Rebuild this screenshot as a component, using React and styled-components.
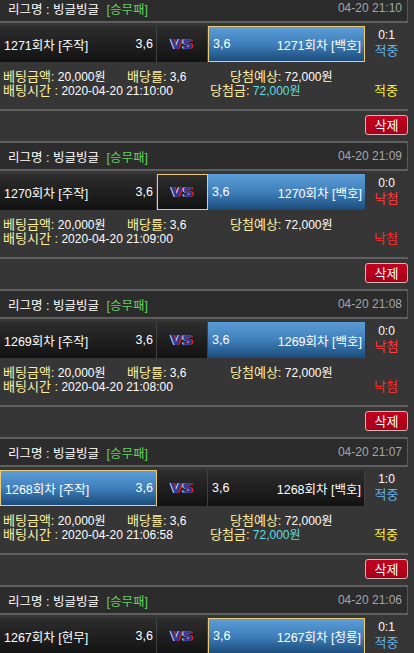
import React from 'react'
import styled, { createGlobalStyle, css } from 'styled-components'

const GlobalStyle = createGlobalStyle`
  html, body {
    margin: 0;
    padding: 0;
    background: #363636;
    overflow: hidden;
  }
  body {
    font-family: "Liberation Sans", "Noto Sans CJK KR", sans-serif;
    font-size: 12px;
    color: #fff;
  }
`

const bets = [
  { no: 1271, date: '04-20 21:10', home: '주작', away: '백호', score: '0:1', win: true, pick: 'away', winner: 'away', time: '2020-04-20 21:10:00' },
  { no: 1270, date: '04-20 21:09', home: '주작', away: '백호', score: '0:0', win: false, pick: 'draw', winner: 'away', time: '2020-04-20 21:09:00' },
  { no: 1269, date: '04-20 21:08', home: '주작', away: '백호', score: '0:0', win: false, pick: null, winner: 'away', time: '2020-04-20 21:08:00' },
  { no: 1268, date: '04-20 21:07', home: '주작', away: '백호', score: '1:0', win: true, pick: 'home', winner: 'home', time: '2020-04-20 21:06:58' },
  { no: 1267, date: '04-20 21:06', home: '현무', away: '청룡', score: '0:1', win: true, pick: 'away', winner: 'away', time: '2020-04-20 21:06:00' },
]

export default function App() {
  return (
    <>
      <GlobalStyle />
      <List>
        {bets.map((b) => (
          <Bet key={b.no} bet={b} />
        ))}
      </List>
    </>
  )
}

function Bet({ bet }) {
  return (
    <Block>
      <Header>
        <League>
          리그명 : 빙글빙글 <Kind>[승무패]</Kind>
        </League>
        <Date>{bet.date}</Date>
      </Header>
      <MatchRow>
        <Team $win={bet.winner === 'home'} $picked={bet.pick === 'home'}>
          <span>{bet.no}회차 [{bet.home}]</span>
          <span>3,6</span>
        </Team>
        <Versus $picked={bet.pick === 'draw'}>VS</Versus>
        <Team $win={bet.winner === 'away'} $picked={bet.pick === 'away'}>
          <span>3,6</span>
          <span>{bet.no}회차 [{bet.away}]</span>
        </Team>
        <Score>
          <div>{bet.score}</div>
          <Result $win={bet.win}>{bet.win ? '적중' : '낙첨'}</Result>
        </Score>
      </MatchRow>
      <Info>
        <InfoRow>
          <Cell $w={124}>
            <Label>베팅금액:</Label> 20,000원
          </Cell>
          <Cell $w={103}>
            <Label>배당률:</Label> 3,6
          </Cell>
          <Cell>
            <Label>당첨예상:</Label> 72,000원
          </Cell>
        </InfoRow>
        <InfoRow>
          <Cell $w={207}>
            <Label>배팅시간 :</Label> {bet.time}
          </Cell>
          <Cell $w={164}>
            {bet.win && (
              <>
                <Label>당첨금:</Label> <Prize>72,000원</Prize>
              </>
            )}
          </Cell>
          <Cell>
            <Outcome $win={bet.win}>{bet.win ? '적중' : '낙첨'}</Outcome>
          </Cell>
        </InfoRow>
      </Info>
      <Actions>
        <DeleteButton>삭제</DeleteButton>
      </Actions>
    </Block>
  )
}

const List = styled.div`
  width: 408px;
  margin-top: -7px;
`

const Block = styled.div`
  display: flex;
  flex-direction: column;
`

const Header = styled.div`
  height: 26px;
  border-top: 2px solid #5f5f5f;
  border-bottom: 2px solid #5f5f5f;
  border-right: 1px solid #585858;
  background: #2c2c2c;
  display: flex;
  align-items: center;
  justify-content: space-between;
  padding: 0 5px 0 8px;
`

const League = styled.div`
  font-size: 12.5px;
  color: #fff;
  white-space: pre;
`

const Kind = styled.span`
  color: #62d05c;
  margin-left: 4px;
`

const Date = styled.div`
  font-size: 12px;
  color: #a6a6a6;
`

const MatchRow = styled.div`
  margin-top: 3px;
  height: 36px;
  display: flex;
`

const darkCell = css`
  background: linear-gradient(#2d2d2d, #121212);
  border-right: 1px solid #404040;
`

const Team = styled.div`
  box-sizing: border-box;
  width: 157px;
  display: flex;
  align-items: center;
  justify-content: space-between;
  padding: 0 3px 0 4px;
  font-size: 12.5px;
  white-space: nowrap;
  ${darkCell}
  ${(p) =>
    p.$win &&
    css`
      background: linear-gradient(#5c9dd8, #3f7fbb 50%, #1b4c7b);
      border-right: none;
    `}
  ${(p) =>
    p.$picked &&
    css`
      border: 1px solid #ebcb73;
    `}
  & + & {
    width: 156px;
  }
`

const Versus = styled.div`
  box-sizing: border-box;
  width: 51px;
  display: flex;
  align-items: center;
  justify-content: center;
  font-family: "DejaVu Sans", sans-serif;
  font-weight: 900;
  font-size: 14px;
  letter-spacing: 1px;
  color: #2b3c9c;
  -webkit-text-stroke: 0.4px #2b3c9c;
  text-shadow: -1px 0 #ffffff, 1.5px 0 #ff1a2a;
  ${darkCell}
  ${(p) =>
    p.$picked &&
    css`
      border: 1px solid #ebcb73;
    `}
`

const Score = styled.div`
  flex: 1;
  display: flex;
  flex-direction: column;
  align-items: center;
  padding-top: 1px;
  line-height: 16px;
  font-size: 12px;
`

const Result = styled.div`
  font-size: 13px;
  color: ${(p) => (p.$win ? '#67b3f0' : '#ff3a3a')};
`

const Info = styled.div`
  padding: 8px 0 11px 3px;
  border-bottom: 2px solid #5f5f5f;
`

const InfoRow = styled.div`
  display: flex;
  height: 14px;
  line-height: 14px;
  font-size: 12px;
  white-space: nowrap;
`

const Cell = styled.div`
  width: ${(p) => (p.$w ? `${p.$w}px` : 'auto')};
  flex: ${(p) => (p.$w ? 'none' : '1')};
`

const Label = styled.span`
  color: #fff0a0;
  font-size: 13px;
`

const Prize = styled.span`
  color: #5fdde0;
`

const Outcome = styled.span`
  font-size: 13px;
  color: ${(p) => (p.$win ? '#fff23a' : '#ff2a2a')};
`

const Actions = styled.div`
  height: 30px;
  display: flex;
  justify-content: flex-end;
  align-items: flex-start;
  padding-top: 4px;
  box-sizing: border-box;
`

const DeleteButton = styled.button`
  width: 43px;
  height: 20px;
  padding: 0;
  border: 1px solid #d9b3b8;
  border-radius: 3px;
  background: linear-gradient(#c4001f, #a50019);
  color: #fff;
  font-family: "Noto Sans CJK KR", sans-serif;
  font-size: 13px;
  line-height: 18px;
`
